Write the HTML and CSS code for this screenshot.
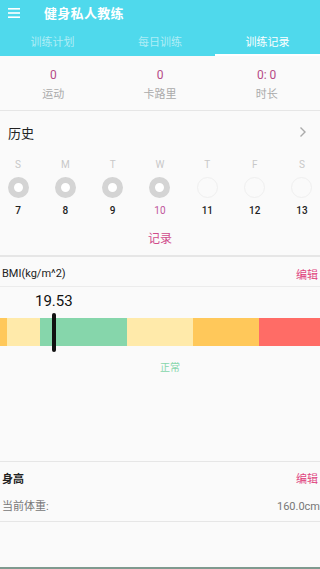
FILE: index.html
```html
<!DOCTYPE html>
<html>
<head>
<meta charset="utf-8">
<link rel="stylesheet" href="styles.css">
</head>
<body>
<div class="app">
  <header class="header">
    <div class="toolbar">
      <svg class="menu" width="12" height="10" viewBox="0 0 12 10"><rect x="0" y="0" width="12" height="1.6" fill="#fff"/><rect x="0" y="4.2" width="12" height="1.6" fill="#fff"/><rect x="0" y="8.4" width="12" height="1.6" fill="#fff"/></svg>
      <span class="title">健身私人教练</span>
    </div>
    <nav class="tabs">
      <div class="tab">训练计划</div>
      <div class="tab">每日训练</div>
      <div class="tab active">训练记录</div>
    </nav>
  </header>

  <section class="stats">
    <div class="stat"><div class="num">0</div><div class="lbl">运动</div></div>
    <div class="stat"><div class="num">0</div><div class="lbl">卡路里</div></div>
    <div class="stat"><div class="num">0: 0</div><div class="lbl">时长</div></div>
  </section>

  <section class="history">
    <div class="hist-head">
      <span>历史</span>
      <svg width="8" height="12" viewBox="0 0 8 12"><path d="M1.5 1.5 L6 6 L1.5 10.5" fill="none" stroke="#aaa" stroke-width="1.4"/></svg>
    </div>
    <div class="week">
      <div class="day"><span class="dl">S</span><span class="dot done"></span><span class="dn">7</span></div>
      <div class="day"><span class="dl">M</span><span class="dot done"></span><span class="dn">8</span></div>
      <div class="day"><span class="dl">T</span><span class="dot done"></span><span class="dn">9</span></div>
      <div class="day"><span class="dl">W</span><span class="dot done"></span><span class="dn today">10</span></div>
      <div class="day"><span class="dl">T</span><span class="dot"></span><span class="dn">11</span></div>
      <div class="day"><span class="dl">F</span><span class="dot"></span><span class="dn">12</span></div>
      <div class="day"><span class="dl">S</span><span class="dot"></span><span class="dn">13</span></div>
    </div>
    <div class="record">记录</div>
  </section>

  <section class="bmi">
    <div class="row-head first">
      <span class="rt">BMI(kg/m^2)</span>
      <span class="edit">编辑</span>
    </div>
    <div class="bmi-body">
      <div class="bmi-val">19.53</div>
      <div class="bar-wrap">
        <div class="bar">
          <span class="seg s-or" style="width:7px"></span>
          <span class="seg s-ly" style="width:33px"></span>
          <span class="seg s-gr" style="width:87px"></span>
          <span class="seg s-ly" style="width:66px"></span>
          <span class="seg s-or" style="width:66px"></span>
          <span class="seg s-rd" style="flex:1"></span>
        </div>
        <span class="marker" style="left:52px"></span>
      </div>
      <div class="status">正常</div>
    </div>
  </section>

  <section class="height">
    <div class="row-head h2">
      <span class="rt bold">身高</span>
      <span class="edit">编辑</span>
    </div>
    <div class="row-sub">
      <span>当前体重:</span>
      <span>160.0cm</span>
    </div>
  </section>
  <div class="fill"></div>
</div>
</body>
</html>
```

FILE: styles.css
```css
* { box-sizing: border-box; margin: 0; padding: 0; }
html, body { width: 320px; height: 569px; overflow: hidden; }
body {
  background: #fafafa;
  font-family: Roboto, "Noto Sans CJK SC", sans-serif;
  color: #222;
}
.app { display: flex; flex-direction: column; height: 569px; border-bottom: 2px solid #7f9a8f; }
.header { background: #4fd9ec; }
.toolbar { height: 25px; display: flex; align-items: center; padding-left: 8px; }
.menu { display: block; }
.title { color: #fff; font-size: 13px; font-weight: bold; margin-left: 24px; letter-spacing: 0.3px; }
.tabs { display: flex; height: 31px; }
.tab {
  flex: 1; text-align: center; font-size: 11px; color: rgba(255,255,255,0.55);
  padding-top: 7px; line-height: 22px; border-bottom: 2px solid transparent;
}
.tab:last-child { flex: 0 0 105px; }
.tab:first-child { flex: 0 0 105px; }
.tab.active { color: #fff; border-bottom-color: #fff; }

.stats { display: flex; height: 55px; border-bottom: 1px solid #e6e6e6; padding-top: 11px; }
.stat { flex: 1; text-align: center; }
.num { color: #b64a86; font-size: 12px; line-height: 16px; }
.lbl { color: #aaa; font-size: 11px; line-height: 16px; margin-top: 4px; }

.history { height: 146px; border-bottom: 2px solid #e6e6e6; }
.hist-head { display: flex; justify-content: space-between; align-items: center; height: 42px; padding: 0 13px 0 8px; font-size: 13px; color: #222; }
.week { display: flex; justify-content: space-between; margin-top: 5px; }
.day { width: 36px; display: flex; flex-direction: column; align-items: center; }
.dl { font-size: 10px; color: #c8c8c8; line-height: 14px; height: 14px; }
.dot { width: 21px; height: 21px; border-radius: 50%; border: 1px solid #efefef; margin-top: 5px; box-sizing: border-box; }
.dot.done { border: 6.5px solid #d4d4d4; background: #fff; }
.dn { font-size: 10px; color: #222; line-height: 14px; margin-top: 6px; font-weight: 500; }
.dn.today { color: #c0569a; font-weight: normal; }
.record { text-align: center; color: #d04b8b; font-size: 12px; margin-top: 13px; line-height: 16px; }

.bmi { height: 205px; border-bottom: 1px solid #e6e6e6; }
.row-head { display: flex; justify-content: space-between; align-items: center; height: 28px; padding: 0 2px; border-bottom: 1px solid #ececec; font-size: 11px; }
.row-head.first { height: 30px; padding-top: 4px; }
.rt { color: #222; }
.rt.bold { font-weight: bold; }
.edit { color: #e0467f; font-size: 11px; }
.bmi-body { padding-top: 5px; }
.bmi-val { font-size: 15px; color: #111; margin-left: 35px; line-height: 18px; }
.bar-wrap { position: relative; margin-top: 8px; height: 28px; }
.bar { display: flex; height: 28px; }
.seg { display: block; height: 28px; }
.s-or { background: #ffc85a; }
.s-ly { background: #ffeaaa; }
.s-gr { background: #86d6ab; }
.s-rd { background: #ff6c66; }
.marker { position: absolute; top: -5px; width: 4px; height: 39px; background: #111; border-radius: 2px; }
.status { text-align: center; color: #86d6ab; font-size: 10px; margin-top: 13px; margin-left: 20px; }

.height { height: 60px; border-bottom: 1px solid #e6e6e6; }
.row-head.h2 { border-bottom: none; height: 32px; }
.row-sub { display: flex; justify-content: space-between; padding: 0 0 0 2px; font-size: 11px; color: #777; line-height: 26px; }
.fill { flex: 1; }
```
